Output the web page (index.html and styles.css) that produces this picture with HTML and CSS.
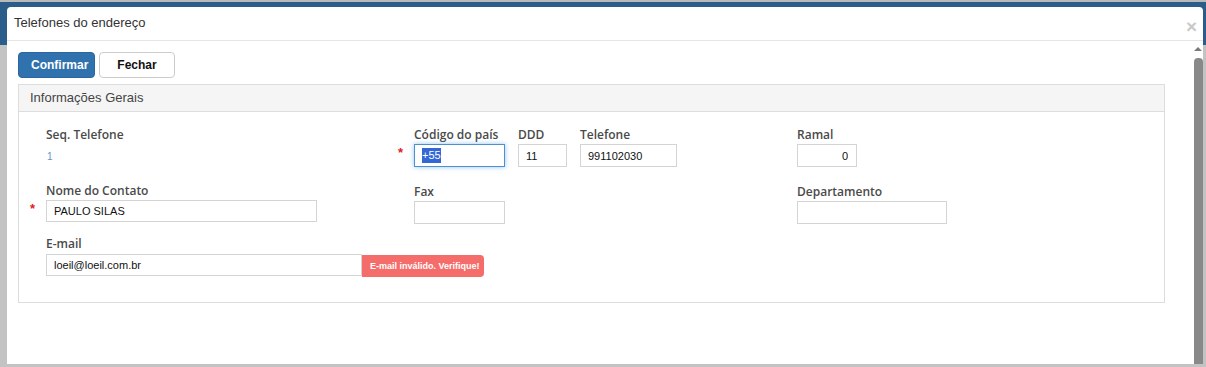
FILE: index.html
```html
<!DOCTYPE html>
<html lang="pt-BR">
<head>
  <meta charset="UTF-8">
  <title>Telefones do endereço</title>
  <link rel="stylesheet" href="styles.css">
</head>
<body>

  <div class="modal">
    <div class="modal-header">
      <h4 class="modal-title">Telefones do endereço</h4>
      <button class="close" type="button">&times;</button>
    </div>

    <div class="modal-main">
      <div class="modal-body">
        <div class="toolbar">
          <button class="btn btn-primary" type="button">Confirmar</button>
          <button class="btn btn-default" type="button">Fechar</button>
        </div>

        <div class="panel">
          <div class="panel-heading">Informações Gerais</div>
          <div class="panel-body">

            <!-- coluna 1 -->
            <div class="col">
              <div class="field">
                <label>Seq. Telefone</label>
                <div class="static-value">1</div>
              </div>
              <div class="field field-name required">
                <label>Nome do Contato</label>
                <input class="input input-name" type="text" value="PAULO SILAS">
              </div>
              <div class="field field-email">
                <label>E-mail</label>
                <div class="email-row">
                  <input class="input input-email" type="text" value="loeil@loeil.com.br">
                  <span class="error-tip">E-mail inválido. Verifique!</span>
                </div>
              </div>
            </div>

            <!-- coluna 2 -->
            <div class="col">
              <div class="phone-group">
                <div class="field required">
                  <label>Código do país</label>
                  <div class="input input-country is-focus"><span class="selected">+55</span></div>
                </div>
                <div class="field">
                  <label>DDD</label>
                  <input class="input input-ddd" type="text" value="11">
                </div>
                <div class="field">
                  <label>Telefone</label>
                  <input class="input input-phone" type="text" value="991102030">
                </div>
              </div>
              <div class="field field-second">
                <label>Fax</label>
                <input class="input input-fax" type="text" value="">
              </div>
            </div>

            <!-- coluna 3 -->
            <div class="col">
              <div class="field">
                <label>Ramal</label>
                <input class="input input-ramal" type="text" value="0">
              </div>
              <div class="field field-second">
                <label>Departamento</label>
                <input class="input input-dept" type="text" value="">
              </div>
            </div>

          </div>
        </div>
      </div>

      <div class="scrollbar">
        <span class="scroll-arrow"></span>
        <span class="scroll-thumb"></span>
      </div>
    </div>
  </div>

</body>
</html>
```

FILE: styles.css
```css
html {
  background: linear-gradient(#b9b9b9 0, #b9b9b9 2px, #2b5d8b 2px, #2b5d8b 45px, #c3c3c3 45px);
  height: 367px;
}

body {
  margin: 0;
  height: 367px;
  overflow: hidden;
  font-family: "Liberation Sans", Arial, sans-serif;
}

.modal {
  margin: 7px 3px 0 7px;
  height: 357px;
  background: #fff;
  border-radius: 4px 4px 0 0;
  display: flex;
  flex-direction: column;
}

.modal-header {
  height: 33px;
  border-bottom: 1px solid #e5e5e5;
  padding: 0 6px 0 7px;
  display: flex;
  align-items: center;
  justify-content: space-between;
}

.modal-title {
  margin: 0 0 3px 0;
  font-size: 13px;
  font-weight: normal;
  color: #333;
}

.close {
  border: none;
  background: none;
  padding: 0;
  margin-top: 5px;
  font-family: "Liberation Sans", Arial, sans-serif;
  font-size: 19px;
  font-weight: bold;
  line-height: 1;
  color: #c9c9c9;
}

.modal-main {
  flex: 1;
  display: flex;
  min-height: 0;
}

.modal-body {
  flex: 1;
  padding: 11px 28px 0 11px;
}

.toolbar {
  display: flex;
  gap: 4px;
}

.btn {
  height: 26px;
  padding: 0 12px;
  border-radius: 4px;
  font-family: "Liberation Sans", Arial, sans-serif;
  font-size: 12px;
  font-weight: bold;
  cursor: pointer;
}

.btn-primary {
  width: 77px;
  background: #3072ad;
  border: 1px solid #2a66a0;
  color: #fff;
}

.btn-default {
  width: 76px;
  background: #fff;
  border: 1px solid #ccc;
  color: #111;
}

.panel {
  margin-top: 6px;
  border: 1px solid #ddd;
  height: 217px;
}

.panel-heading {
  height: 26px;
  line-height: 25px;
  padding-left: 11px;
  background: #f5f5f5;
  border-bottom: 1px solid #ddd;
  font-size: 13px;
  color: #444;
}

.panel-body {
  display: grid;
  grid-template-columns: 368px 383px 1fr;
  padding: 14px 0 0 27px;
}

.col {
  display: flex;
  flex-direction: column;
}

.field {
  position: relative;
  display: flex;
  flex-direction: column;
}

.field label {
  display: block;
  height: 17px;
  line-height: 17px;
  margin-bottom: 1px;
  font-family: "Open Sans", sans-serif;
  font-size: 12px;
  font-weight: 600;
  color: #4a4a4a;
}

.required::before {
  content: "*";
  position: absolute;
  left: -16px;
  top: 19px;
  color: #e02020;
  font-size: 13px;
  font-weight: bold;
}

.static-value {
  margin-top: 6px;
  height: 14px;
  line-height: 14px;
  padding-left: 1px;
  font-size: 10px;
  color: #6a93c6;
}

.field-name {
  margin-top: 18px;
}

.field-email {
  margin-top: 13px;
}

.field-second {
  margin-top: 16px;
}

.input {
  box-sizing: border-box;
  height: 23px;
  border: 1px solid #d4d4d4;
  padding: 0 7px;
  font-family: "Liberation Sans", Arial, sans-serif;
  font-size: 11px;
  color: #111;
  background: #fff;
  outline: none;
}

.input-name {
  width: 271px;
  height: 22px;
}

.email-row {
  display: flex;
  align-items: flex-start;
  margin-top: 1px;
}

.input-email {
  flex-shrink: 0;
  width: 316px;
  height: 22px;
}

.error-tip {
  flex-shrink: 0;
  margin-top: 1px;
  height: 22px;
  line-height: 22px;
  padding: 0 4px 0 8px;
  background: #f46d6a;
  border-radius: 0 4px 4px 0;
  color: #fff;
  font-size: 9px;
  font-weight: bold;
  white-space: nowrap;
}

.phone-group {
  display: flex;
  gap: 13px;
}

.input-country {
  width: 91px;
  display: flex;
  align-items: center;
  border-color: #4d8fd1;
  box-shadow: 0 0 5px rgba(102, 175, 233, 0.7);
}

.selected {
  background: #3367d6;
  color: #fff;
  line-height: 15px;
}

.input-ddd {
  width: 49px;
}

.input-phone {
  width: 97px;
}

.input-fax {
  width: 91px;
}

.input-ramal {
  width: 60px;
  text-align: right;
  padding-right: 8px;
}

.input-dept {
  width: 150px;
}

.scrollbar {
  width: 10px;
  display: flex;
  flex-direction: column;
  align-items: center;
  background: #fff;
}

.scroll-arrow {
  margin-top: 6px;
  width: 0;
  height: 0;
  border-left: 4px solid transparent;
  border-right: 4px solid transparent;
  border-bottom: 4px solid #7a7a7a;
}

.scroll-thumb {
  margin-top: 7px;
  flex: 1;
  width: 9px;
  background: #898989;
  border-radius: 4px 4px 0 0;
}
```
